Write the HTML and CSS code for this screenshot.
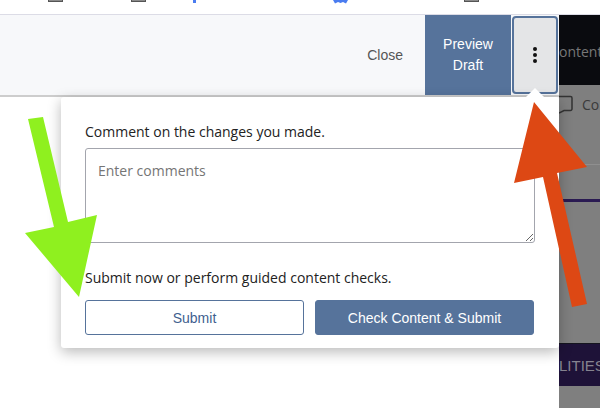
FILE: index.html
```html
<!DOCTYPE html>
<html lang="en">
<head>
    <meta charset="UTF-8">
    <meta name="viewport" content="width=device-width, initial-scale=1.0">
    <title>Submit Draft</title>
    <link rel="stylesheet" href="styles.css">
</head>
<body>

<div class="bookmarks">
    <span class="bookmark-icon first"></span>
    <span class="bookmark-icon second"></span>
    <span class="bookmark-blue small"></span>
    <svg class="bookmark-star" width="15" height="4" viewBox="0 0 15 4">
        <path d="M0 0H15L13 3.500L10 2L7.500 3L5 2L2 3.500Z" fill="#4a7cf0"/>
    </svg>
    <span class="bookmark-icon last"></span>
</div>

<div class="app">
    <div class="main">
        <div class="toolbar">
            <a class="close-link">Close</a>
            <button class="preview-btn">Preview<br>Draft</button>
            <button class="more-btn" aria-label="More">
                <span class="dot"></span>
                <span class="dot"></span>
                <span class="dot"></span>
            </button>
        </div>
    </div>

    <div class="side">
        <div class="side-header">ontent</div>
        <div class="side-comments">
            <svg class="comment-icon" width="16" height="20" viewBox="0 0 16 20">
                <path d="M-4 1.500H11.500a1.500 1.500 0 0 1 1.500 1.500V14a1.500 1.500 0 0 1-1.500 1.500H5L0 18" fill="none" stroke="#333" stroke-width="1.500"/>
            </svg>
            <span>Co</span>
        </div>
        <div class="side-line"></div>
        <div class="side-banner">LITIES</div>
    </div>
</div>

<div class="popover">
    <span class="caret"></span>
    <p class="popover-text">Comment on the changes you made.</p>
    <textarea class="comment-box" placeholder="Enter comments"></textarea>
    <p class="popover-text submit-text">Submit now or perform guided content checks.</p>
    <div class="popover-actions">
        <button class="btn btn-outline">Submit</button>
        <button class="btn btn-solid">Check Content &amp; Submit</button>
    </div>
</div>

<!-- annotation arrows drawn on top of the screenshot -->
<svg class="arrows" width="600" height="408" viewBox="0 0 600 408">
    <polygon fill="#8ff01f" points="28,119 43,117 68,222 97,215 79,297 25,233 54,227"/>
    <polygon fill="#dd4814" points="534,102 587,167 557,173 587,304 572,307 543,177 514,183"/>
</svg>

</body>
</html>
```

FILE: styles.css
```css
body {
    margin: 0;
    width: 600px;
    height: 408px;
    overflow: hidden;
    background-color: white;
    font-family: "Liberation Sans", Arial, sans-serif;
    position: relative;
}
.bookmarks {
    height: 14px;
    display: flex;
    align-items: flex-start;
    border-bottom: 1px solid #dcdce6;
}
.bookmark-icon {
    width: 13px;
    height: 1px;
    background-color: #8a8a8a;
    border: 1px solid #555;
    border-top: none;
}
.bookmark-icon.first {
    margin-left: 48px;
}
.bookmark-icon.second {
    margin-left: 68px;
}
.bookmark-icon.last {
    margin-left: 116px;
}
.bookmark-blue.small {
    width: 3px;
    height: 3px;
    margin-left: 47px;
    background-color: #4a7cf0;
}
.bookmark-star {
    margin-left: 137px;
}
.app {
    display: flex;
    height: 393px;
}
.main {
    width: 559px;
}
.toolbar {
    height: 80px;
    display: flex;
    align-items: stretch;
    background-color: #f7f8fa;
    border-bottom: 2px solid #cdcdcd;
}
.close-link {
    margin-left: auto;
    margin-right: 22px;
    align-self: center;
    font-size: 14px;
    color: #555;
}
.preview-btn {
    width: 86px;
    padding: 0;
    border: none;
    background-color: #56739b;
    color: white;
    font-family: inherit;
    font-size: 14px;
    line-height: 21px;
}
.more-btn {
    width: 46px;
    margin: 1px;
    padding: 0;
    box-sizing: border-box;
    display: flex;
    flex-direction: column;
    align-items: center;
    justify-content: center;
    gap: 2px;
    background-color: #e4e5e7;
    border: 2px solid #56739b;
    border-radius: 4px;
}
.dot {
    width: 4px;
    height: 4px;
    border-radius: 50%;
    background-color: #111;
}
.side {
    flex: 1;
    min-width: 0;
    overflow: hidden;
    background-color: #7f7f7f;
    color: #777;
    white-space: nowrap;
}
.side-header {
    height: 70px;
    line-height: 74px;
    background-color: #0a0b0f;
    font-size: 14px;
    font-family: "Open Sans", sans-serif;
}
.side-comments {
    height: 80px;
    box-sizing: border-box;
    display: flex;
    align-items: flex-start;
    gap: 7px;
    padding-top: 10px;
    border-bottom: 1px solid #8f8f8f;
    color: #3a3a3a;
    font-size: 14px;
    font-family: "Open Sans", sans-serif;
}
.comment-icon {
    flex-shrink: 0;
}
.side-line {
    height: 3px;
    margin-top: 34px;
    background-color: #2a1a52;
}
.side-banner {
    height: 43px;
    margin-top: 141px;
    box-sizing: border-box;
    padding-top: 13px;
    background-color: #1e1238;
    border-top: 1px solid #15151f;
    color: #85838f;
    font-size: 15px;
}
.popover {
    position: absolute;
    left: 61px;
    top: 97px;
    width: 498px;
    height: 251px;
    box-sizing: border-box;
    padding: 25px 24px 0;
    background-color: white;
    border-radius: 3px;
    box-shadow: 0 4px 14px rgba(0, 0, 0, 0.28);
}
.caret {
    position: absolute;
    left: 465px;
    top: -9px;
    width: 0;
    height: 0;
    border-left: 9px solid transparent;
    border-right: 9px solid transparent;
    border-bottom: 9px solid white;
}
.popover-text {
    margin: 0;
    font-family: "Open Sans", sans-serif;
    font-size: 14px;
    line-height: 19px;
    color: #222;
}
.comment-box {
    display: block;
    width: 450px;
    height: 95px;
    margin-top: 7px;
    padding: 12px;
    box-sizing: border-box;
    border: 1px solid #a3a5ad;
    border-radius: 3px;
    font-family: "Open Sans", sans-serif;
    font-size: 14px;
}
.comment-box::placeholder {
    color: #757575;
}
.submit-text {
    margin-top: 25px;
}
.popover-actions {
    display: flex;
    gap: 11px;
    margin-top: 13px;
}
.btn {
    width: 219px;
    height: 35px;
    padding: 0;
    box-sizing: border-box;
    border-radius: 3px;
    font-family: inherit;
    font-size: 14px;
}
.btn-outline {
    background-color: white;
    border: 1px solid #56739b;
    color: #3f5f8f;
}
.btn-solid {
    background-color: #56739b;
    border: 1px solid #56739b;
    color: white;
}
.arrows {
    position: absolute;
    left: 0;
    top: 0;
}
```
